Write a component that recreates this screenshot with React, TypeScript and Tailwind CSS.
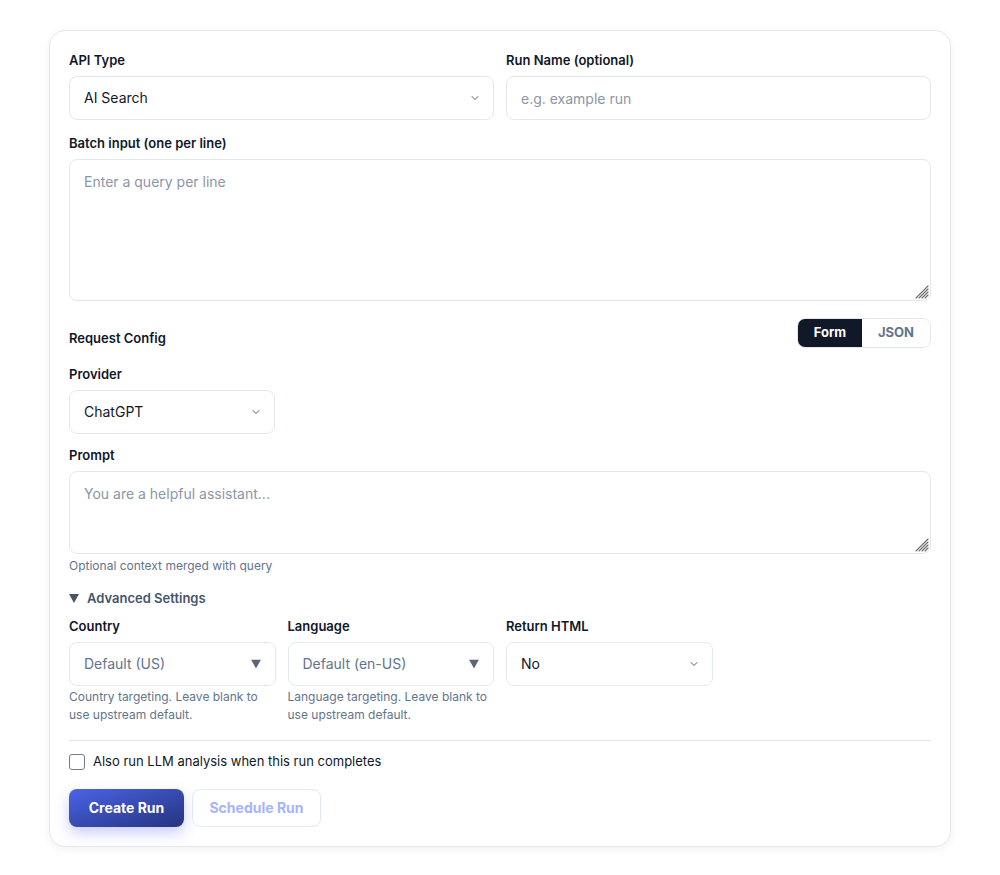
import React from 'react';

const label = 'block text-[13px] leading-5 font-semibold text-gray-900 mb-1.5';
const field =
  'w-full h-11 rounded-lg border border-[#e2e8f0] bg-white px-3.5 text-sm text-gray-900 outline-none placeholder:text-[#8c96a8]';

function Chevron() {
  return (
    <svg className="absolute right-[15px] top-1/2 -translate-y-1/2 pointer-events-none" width="8" height="5" viewBox="0 0 8 5" fill="none">
      <path d="M1 1l3 3 3-3" stroke="#9aa3b2" strokeWidth="1.1" strokeLinecap="round" strokeLinejoin="round" />
    </svg>
  );
}

function Triangle() {
  return (
    <svg className="absolute right-[15px] top-1/2 -translate-y-1/2 pointer-events-none" width="10" height="9" viewBox="0 0 10 9">
      <path d="M0 0h10L5 9z" fill="#5b6577" />
    </svg>
  );
}

function Select({ value, muted, caret }: { value: string; muted?: boolean; caret: 'chevron' | 'triangle' }) {
  return (
    <div className="relative">
      <select
        defaultValue={value}
        className={`${field} appearance-none pr-8 ${muted ? 'text-slate-500' : 'text-gray-900'}`}
      >
        <option>{value}</option>
      </select>
      {caret === 'chevron' ? <Chevron /> : <Triangle />}
    </div>
  );
}

// textarea with the hatched resize grip drawn in the corner
function Area({ h, placeholder }: { h: string; placeholder: string }) {
  return (
    <div className="relative">
      <textarea
        className={`block w-full ${h} resize-none rounded-lg border border-[#e2e8f0] bg-white px-3.5 py-3 text-sm text-gray-900 outline-none placeholder:text-[#8c96a8]`}
        placeholder={placeholder}
      />
      <svg className="absolute right-[2px] bottom-[2px] pointer-events-none" width="14" height="14" viewBox="0 0 14 14">
        <g stroke="#6b6b6b" strokeWidth="1.1" strokeLinecap="round">
          <path d="M13 1L1 13" />
          <path d="M13 4L4 13" />
          <path d="M13 7L7 13" />
          <path d="M13 10L10 13" />
        </g>
      </svg>
    </div>
  );
}

export default function App() {
  return (
    <div className="min-h-screen bg-white pt-[30px]" style={{ fontFamily: 'Inter, "Noto Sans", sans-serif' }}>
      <div className="mx-auto w-[902px] rounded-2xl border border-[#e5e7eb] bg-white p-[19px] shadow-[0_2px_8px_rgba(15,23,42,0.06)]">
        {/* Top row */}
        <div className="grid grid-cols-2 gap-3">
          <div>
            <label className={label}>API Type</label>
            <Select value="AI Search" caret="chevron" />
          </div>
          <div>
            <label className={label}>Run Name (optional)</label>
            <input className={field} placeholder="e.g. example run" />
          </div>
        </div>

        <div className="mt-[13px]">
          <label className={label}>Batch input (one per line)</label>
          <Area h="h-[142px]" placeholder="Enter a query per line" />
        </div>

        {/* Request config */}
        <div className="mt-[17px] flex items-end justify-between">
          <span className="text-[13px] leading-5 font-semibold text-gray-900">Request Config</span>
          <div className="flex h-[30px] overflow-hidden rounded-lg border border-[#e2e8f0] text-[13px] font-bold">
            <button className="w-16 bg-[#111827] text-white">Form</button>
            <button className="w-[68px] bg-white text-slate-500">JSON</button>
          </div>
        </div>

        <div className="mt-4 w-[206px]">
          <label className={label}>Provider</label>
          <Select value="ChatGPT" caret="chevron" />
        </div>

        <div className="mt-[11px]">
          <label className={label}>Prompt</label>
          <Area h="h-[83px]" placeholder="You are a helpful assistant..." />
          <p className="mt-1 text-xs leading-4 text-slate-500">Optional context merged with query</p>
        </div>

        {/* Advanced */}
        <div className="mt-[14px] flex items-center gap-2 text-[13px] leading-5 font-semibold text-slate-600">
          <svg width="10" height="9" viewBox="0 0 10 9">
            <path d="M0 0h10L5 9z" fill="#475569" />
          </svg>
          Advanced Settings
        </div>

        <div className="mt-2 grid grid-cols-4 gap-3">
          <div>
            <label className={label}>Country</label>
            <Select value="Default (US)" muted caret="triangle" />
            <p className="mt-0.5 text-xs leading-[18px] text-slate-500">Country targeting. Leave blank to use upstream default.</p>
          </div>
          <div>
            <label className={label}>Language</label>
            <Select value="Default (en-US)" muted caret="triangle" />
            <p className="mt-0.5 text-xs leading-[18px] text-slate-500">Language targeting. Leave blank to use upstream default.</p>
          </div>
          <div>
            <label className={label}>Return HTML</label>
            <Select value="No" caret="chevron" />
          </div>
        </div>

        <div className="mt-4 border-t border-[#e5e7eb]" />

        <label className="mt-[11px] flex h-5 items-center gap-2 text-[13px] text-gray-900">
          <span className="h-4 w-4 rounded-[3px] border border-[#767c87] bg-white" />
          Also run LLM analysis when this run completes
        </label>

        <div className="mt-[17px] flex gap-2">
          <button className="h-[38px] w-[115px] rounded-lg bg-gradient-to-br from-[#4b64e8] to-[#26347f] text-sm font-bold text-white shadow-[0_6px_14px_rgba(79,90,230,0.3)]">
            Create Run
          </button>
          <button className="h-[38px] w-[129px] rounded-lg border border-[#e0e7ff] bg-white text-sm font-bold text-[#a5b4fc]">
            Schedule Run
          </button>
        </div>
      </div>
    </div>
  );
}
